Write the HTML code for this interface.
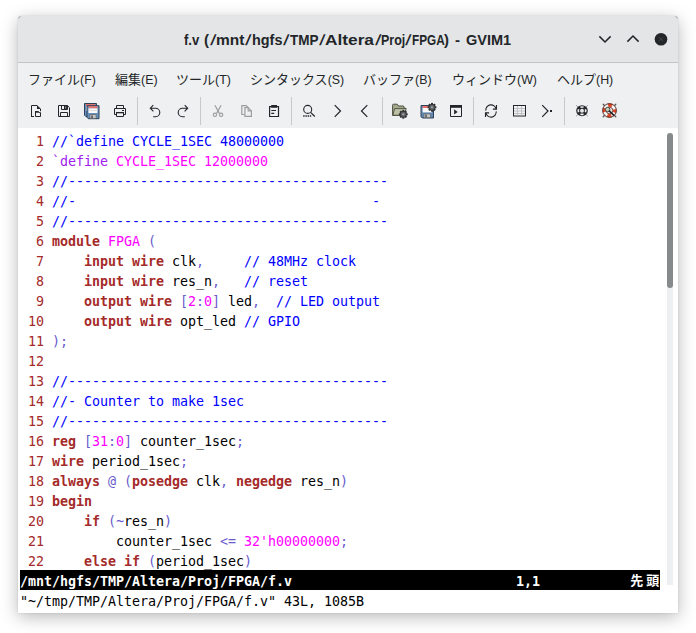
<!DOCTYPE html>
<html lang="ja">
<head>
<meta charset="utf-8">
<title>f.v (/mnt/hgfs/TMP/Altera/Proj/FPGA) - GVIM1</title>
<style>
html,body{margin:0;padding:0;}
body{width:696px;height:633px;background:#fff;overflow:hidden;position:relative;font-family:"Liberation Sans","Noto Sans CJK JP",sans-serif;}
#win{position:absolute;left:18px;top:16px;width:660px;height:597px;background:#fff;border-radius:3px 3px 0 0;
  box-shadow:0 4px 17px rgba(0,0,0,0.28),0 0 2.5px rgba(0,0,0,0.10);}
#title{position:absolute;left:0;top:0;width:660px;height:46px;background:#e3e5e7;border-radius:3px 3px 0 0;border-bottom:1px solid #c2c4c6;}
#ttext{position:absolute;left:0;top:13px;width:660px;height:22px;white-space:pre;font-weight:bold;font-size:15px;line-height:22px;color:#232629;}.ts{position:absolute;top:0;display:inline-block;transform-origin:0 50%;}
#chrome{position:absolute;left:0;top:47px;width:660px;height:65px;background:#eff0f1;}
.mi{position:absolute;top:8px;height:20px;line-height:20px;font-size:13px;color:#232629;white-space:nowrap;}
.mi span{font-size:12.4px;}
.sep{position:absolute;top:80px;width:1px;height:34px;background:#c9cbcd;}
.ic{position:absolute;top:87px;width:16px;height:16px;overflow:visible;}
#ed{position:absolute;left:2px;top:114px;width:640px;height:480px;background:#fff;font-family:"DejaVu Sans Mono","Liberation Mono",monospace;font-size:13.333px;letter-spacing:-0.0255px;color:#000;}
.l{height:20px;line-height:20px;white-space:pre;position:relative;top:2px;}
.n{color:#a52a2a;}
.c{color:#0000ff;}
.k{color:#a52a2a;font-weight:bold;}
.m{color:#ff00ff;}
.s{color:#6a5acd;}
.p{color:#a020f0;}
#st{position:absolute;left:0;top:440px;width:640px;height:20px;background:#000;color:#fff;font-weight:bold;}
#st .l{position:absolute;left:0;top:1px;}#cmd .l{position:absolute;left:0;top:2px;}
#cmd{position:absolute;left:0;top:460px;width:640px;height:20px;}
.jp{font-family:"Noto Sans CJK JP","IPAGothic",sans-serif;font-weight:bold;font-size:13px;display:inline-block;width:16px;text-align:center;position:relative;top:-1.2px;left:0.8px;}
#sbt{position:absolute;left:649px;top:117px;width:6px;height:451.6px;border-radius:3px 3px 0 0;background:#eeeff0;}
#sbh{position:absolute;left:649px;top:117px;width:6px;height:155px;border-radius:3px;background:#868a8b;}
</style>
</head>
<body>
<div id="win">
  <div id="title">
    <div id="ttext"><span class="ts" style="left:165.5px;transform:scaleX(0.873)">f.v </span><span class="ts" style="left:185.9px;transform:scaleX(1.000)">(</span><span class="ts" style="left:192.7px;transform-origin:50% 55%;transform:skewX(-13deg)">/</span><span class="ts" style="left:198.1px;transform:scaleX(1.033)">mnt</span><span class="ts" style="left:227.9px;transform-origin:50% 55%;transform:skewX(-13deg)">/</span><span class="ts" style="left:233.5px;transform:scaleX(0.960)">hgfs</span><span class="ts" style="left:265.8px;transform-origin:50% 55%;transform:skewX(-13deg)">/</span><span class="ts" style="left:271.9px;transform:scaleX(0.903)">TMP</span><span class="ts" style="left:301.7px;transform-origin:50% 55%;transform:skewX(-13deg)">/</span><span class="ts" style="left:307.3px;transform:scaleX(1.152)">Altera</span><span class="ts" style="left:357.7px;transform-origin:50% 55%;transform:skewX(-13deg)">/</span><span class="ts" style="left:363.1px;transform:scaleX(0.829)">Proj</span><span class="ts" style="left:388.4px;transform-origin:50% 55%;transform:skewX(-13deg)">/</span><span class="ts" style="left:393.8px;transform:scaleX(0.785)">FPGA</span><span class="ts" style="left:426.0px;transform:scaleX(1.000)">) </span><span class="ts" style="left:437.1px;transform:scaleX(1.000)">- </span><span class="ts" style="left:447.9px;transform:scaleX(0.968)">GVIM1</span></div>
    <svg style="position:absolute;left:576px;top:12px" width="80" height="22" viewBox="0 0 80 22">
      <path d="M5.4 8.4 L11 14 L16.6 8.4" fill="none" stroke="#232629" stroke-width="1.5"/>
      <path d="M33.4 13.6 L39 8 L44.6 13.6" fill="none" stroke="#232629" stroke-width="1.5"/>
      <circle cx="67" cy="11.3" r="6.3" fill="#232629"/>
      <path d="M65 9.3 L69 13.3 M69 9.3 L65 13.3" stroke="#46494d" stroke-width="1"/>
    </svg>
  </div>
  <svg style="position:absolute;left:0;top:0" width="660" height="6" viewBox="0 0 660 6"><path d="M.5 2.6A2.4 2.4 0 0 1 2.6 .5" fill="none" stroke="#a0a0a0" stroke-width=".9"/><path d="M657.4 .5A2.4 2.4 0 0 1 659.5 2.6" fill="none" stroke="#a0a0a0" stroke-width=".9"/></svg>
  <div id="chrome"></div>
  <div id="menu" style="position:absolute;left:0;top:46px;">
    <div class="mi" style="left:10px">ファイル<span>(F)</span></div>
    <div class="mi" style="left:97px">編集<span>(E)</span></div>
    <div class="mi" style="left:158px">ツール<span>(T)</span></div>
    <div class="mi" style="left:232px">シンタックス<span>(S)</span></div>
    <div class="mi" style="left:345px">バッファ<span>(B)</span></div>
    <div class="mi" style="left:434px">ウィンドウ<span>(W)</span></div>
    <div class="mi" style="left:539px">ヘルプ<span>(H)</span></div>
  </div>
  <svg id="tbsvg" style="position:absolute;left:0;top:80px" width="660" height="32" viewBox="18 96 660 32">
<rect x="137" y="97" width="1" height="28" fill="#c6c8ca"/>
<rect x="200" y="97" width="1" height="28" fill="#c6c8ca"/>
<rect x="291" y="97" width="1" height="28" fill="#c6c8ca"/>
<rect x="382" y="97" width="1" height="28" fill="#c6c8ca"/>
<rect x="473" y="97" width="1" height="28" fill="#c6c8ca"/>
<rect x="564" y="97" width="1" height="28" fill="#c6c8ca"/>
<g transform="translate(28,103)"><path d="M3.5 14V2.5H9M12.5 6V8.2M3.5 13.5H6" fill="none" stroke="#232629"/><path d="M9 2l4 4H9z" fill="#232629"/><path d="M7.5 13.5V8.8H10.2l.8.8H12.5v3.9z" fill="none" stroke="#232629"/><rect x="7" y="8" width="3.6" height="1.6" fill="#232629"/></g>
<g transform="translate(56,103)"><path d="M2.5 2.5H11.3L13.5 4.7V13.5H2.5z" fill="none" stroke="#232629"/><path d="M5.5 2.5V6.5H11.5V2.5" fill="none" stroke="#232629"/><rect x="8" y="2.5" width="3" height="4" fill="#232629"/><rect x="9.2" y="3.4" width="1" height="2.2" fill="#9a9c9e"/><path d="M4.5 13.5V9.5H11.5V13.5" fill="none" stroke="#232629"/></g>
<g transform="translate(84,103)"><g transform="translate(0,0)"><path d="M.5 .5H12.5V13.5H1.8L.5 12.2z" fill="#6690bd" stroke="#2e4157"/><rect x="2" y="1" width="9" height="2.2" fill="#e8736e"/><rect x="2" y="3.2" width="9" height="4.6" fill="#fafafa"/><rect x="2" y="5" width="9" height=".8" fill="#d9d9d9"/><rect x="3.5" y="9.5" width="6" height="3.6" fill="#c9c9c6" stroke="#5a5a58" stroke-width=".6"/><rect x="4.8" y="10.2" width="1.6" height="2.6" fill="#55595c"/></g><g transform="translate(2.5,2.2)"><path d="M.5 .5H12.5V13.5H1.8L.5 12.2z" fill="#6690bd" stroke="#2e4157"/><rect x="2" y="1" width="9" height="2.2" fill="#e8736e"/><rect x="2" y="3.2" width="9" height="4.6" fill="#fafafa"/><rect x="2" y="5" width="9" height=".8" fill="#d9d9d9"/><rect x="3.5" y="9.5" width="6" height="3.6" fill="#c9c9c6" stroke="#5a5a58" stroke-width=".6"/><rect x="4.8" y="10.2" width="1.6" height="2.6" fill="#55595c"/></g></g>
<g transform="translate(112,103)"><path d="M4.5 5.5V2.5H11.5V5.5" fill="none" stroke="#232629"/><path d="M4.5 11.5H2.5V5.5H13.5V11.5H11.5" fill="none" stroke="#232629"/><path d="M4.5 9.5H11.5V13.5H4.5z" fill="none" stroke="#232629"/><rect x="4" y="9" width="8" height="1.3" fill="#232629"/><rect x="10" y="7" width="2" height="1" fill="#232629"/></g>
<g transform="translate(147,103)"><path d="M6.3 2.2L3.3 5.2L6.4 8.3M3.5 5.3H8.6A4.2 4.2 0 0 1 8.6 13.7H6.2" fill="none" stroke="#232629" stroke-width="1.1"/></g>
<g transform="translate(175,103)"><path d="M9.7 2.2L12.7 5.2L9.6 8.3M12.5 5.3H7.4A4.2 4.2 0 0 0 7.4 13.7H9.8" fill="none" stroke="#232629" stroke-width="1.1"/></g>
<g transform="translate(210,103)"><path d="M4.9 2.3L9.4 10.4M11.1 2.3L6.6 10.4" fill="none" stroke="#9c9ea0" stroke-width="1.2"/><circle cx="4.9" cy="11.8" r="1.7" fill="none" stroke="#9c9ea0" stroke-width="1.1"/><circle cx="11.1" cy="11.8" r="1.7" fill="none" stroke="#9c9ea0" stroke-width="1.1"/></g>
<g transform="translate(238,103)"><path d="M6.6 11.5H3.8V2.6H8.2L10 4.4" fill="none" stroke="#9c9ea0" stroke-width="1.2"/><path d="M6.9 4.7H10.2L13.4 7.9V13.4H6.9z" fill="none" stroke="#9c9ea0" stroke-width="1.2"/><path d="M10.2 4.7V7.9H13.4" fill="none" stroke="#9c9ea0" stroke-width="1.1"/></g>
<g transform="translate(266,103)"><path d="M3.6 3.6H12.5V13.5H3.6z" fill="none" stroke="#232629" stroke-width="1.2"/><rect x="5.2" y="2" width="5.8" height="2.7" fill="#232629"/><path d="M5.3 7.5H10M5.3 10.4H8.2" stroke="#232629" stroke-width="1.1"/></g>
<g transform="translate(301,103)"><circle cx="6.7" cy="6.4" r="4" fill="none" stroke="#232629" stroke-width="1.1"/><path d="M9.6 9.3L13.8 13.5" stroke="#232629" stroke-width="1.2"/><path d="M2.2 13H10.4" stroke="#232629" stroke-width="1.4" stroke-dasharray="1.4 .8"/></g>
<g transform="translate(329,103)"><path d="M5.7 2.2L11.5 8L5.7 13.8" fill="none" stroke="#232629" stroke-width="1.2"/></g>
<g transform="translate(357,103)"><path d="M10.3 2.2L4.5 8L10.3 13.8" fill="none" stroke="#232629" stroke-width="1.2"/></g>
<g transform="translate(392,103)"><path d="M.6 12.5V2.2Q.6 1.2 1.6 1.2H5.2L6.6 3H11Q12 3 12 4V5.2H13.6L12.4 12.5z" fill="#a4a88c" stroke="#4c4f40" stroke-width="1"/><path d="M.9 12.2L2.6 5.6H14.2L12.4 12.2z" fill="#bdc1a6" stroke="#4c4f40" stroke-width=".9"/><g transform="translate(11.3,11.3)"><g fill="#2e3032"><rect x="-1" y="-4.4" width="2" height="8.8"/><rect x="-4.4" y="-1" width="8.8" height="2"/><rect x="-1" y="-4.4" width="2" height="8.8" transform="rotate(45)"/><rect x="-4.4" y="-1" width="8.8" height="2" transform="rotate(45)"/></g><circle r="3.1" fill="#5c5f61" stroke="#2e3032" stroke-width=".9"/><circle r="1.1" fill="#a4a6a8"/></g></g>
<g transform="translate(420,103)"><path d="M1 2.5H13.5V15H2.3L1 13.7z" fill="#6088b4" stroke="#2e4157"/><rect x="2.6" y="3" width="9.4" height="2" fill="#e8736e"/><rect x="2.6" y="5" width="9.4" height="4.4" fill="#fafafa"/><rect x="4" y="11" width="6.4" height="3.6" fill="#c9c9c6" stroke="#5a5a58" stroke-width=".6"/><rect x="5.2" y="11.6" width="1.6" height="2.8" fill="#55595c"/><g transform="translate(12,4.3)"><g fill="#2e3032"><rect x="-1" y="-4.4" width="2" height="8.8"/><rect x="-4.4" y="-1" width="8.8" height="2"/><rect x="-1" y="-4.4" width="2" height="8.8" transform="rotate(45)"/><rect x="-4.4" y="-1" width="8.8" height="2" transform="rotate(45)"/></g><circle r="3.1" fill="#5c5f61" stroke="#2e3032" stroke-width=".9"/><circle r="1.1" fill="#a4a6a8"/></g></g>
<g transform="translate(448,103)"><path d="M2.5 2.5H13.5V13.5H2.5z" fill="none" stroke="#232629"/><rect x="2" y="2" width="12" height="2.8" fill="#232629"/><path d="M6.1 6.3v5.2l3.6-2.6z" fill="#232629"/></g>
<g transform="translate(483,103)"><path d="M2.8 7.6A5.2 5.2 0 0 1 13.1 6.2M13.2 8.4A5.2 5.2 0 0 1 2.9 9.8" fill="none" stroke="#232629" stroke-width="1.1"/><path d="M13.5 2V6.1H9.9M2.5 14V9.9H6.1" fill="none" stroke="#232629" stroke-width="1.1"/></g>
<g transform="translate(511,103)"><rect x="2.5" y="2.5" width="12" height="10.5" fill="#f1f2f3" stroke="#232629"/><path d="M6.5 3V12.5M10.5 3V12.5M3 5.5H14M3 8H14M3 10.5H14" stroke="#bbbdbf" stroke-width=".9" fill="none"/></g>
<g transform="translate(539,103)"><path d="M3.2 2.2L9 8L3.2 13.8" fill="none" stroke="#232629" stroke-width="1.2"/><rect x="11" y="7" width="2" height="2" fill="#232629"/></g>
<g transform="translate(574,103)"><g transform="translate(8,7.7)"><path d="M-5.8-5.4L-3.6-3.4M5.8-5.4L3.6-3.4M-5.8 5.4L-3.6 3.4M5.8 5.4L3.6 3.4" stroke="#232629" stroke-width=".8" opacity=".55"/><ellipse rx="5.8" ry="5.5" fill="#232629"/><g fill="#eff0f1"><path transform="rotate(0)" d="M-1.78 -4.19A4.55 4.55 0 0 1 1.78 -4.19L1.28 -2.62A2.85 2.85 0 0 0 -1.28 -2.62z"/><path transform="rotate(90)" d="M-1.78 -4.19A4.55 4.55 0 0 1 1.78 -4.19L1.28 -2.62A2.85 2.85 0 0 0 -1.28 -2.62z"/><path transform="rotate(180)" d="M-1.78 -4.19A4.55 4.55 0 0 1 1.78 -4.19L1.28 -2.62A2.85 2.85 0 0 0 -1.28 -2.62z"/><path transform="rotate(270)" d="M-1.78 -4.19A4.55 4.55 0 0 1 1.78 -4.19L1.28 -2.62A2.85 2.85 0 0 0 -1.28 -2.62z"/></g><circle r="1.95" fill="#eff0f1"/><circle r=".6" fill="#c9cbcd"/></g></g>
<g transform="translate(602,103)"><g transform="translate(7.5,7.5)"><path d="M-6.3-6.3L6.3 6.3M6.3-6.3L-6.3 6.3" stroke="#555" stroke-width="1.3" stroke-linecap="round"/><circle r="5.1" fill="none" stroke="#f2f2f2" stroke-width="3.6"/><circle r="5.1" fill="none" stroke="#e0482a" stroke-width="3.6" stroke-dasharray="4 4" stroke-dashoffset="2"/><circle r="6.9" fill="none" stroke="#4a2018" stroke-width=".9"/><circle r="3.3" fill="#e2e2e2" stroke="#6a3226" stroke-width=".8"/><circle cx="-1.9" cy="-1" r="2.2" fill="#c9d2bb" stroke="#3c3c3c" stroke-width=".9"/><path d="M-.1 .7L4.2 4.6" stroke="#222" stroke-width="1.6" stroke-linecap="round"/></g></g>
</svg>
  <div id="ed">
<div class="l"><span class="n">  1 </span><span class="c">//`define CYCLE_1SEC 48000000</span></div>
<div class="l"><span class="n">  2 </span><span class="p">`define</span> <span class="m">CYCLE_1SEC 12000000</span></div>
<div class="l"><span class="n">  3 </span><span class="c">//----------------------------------------</span></div>
<div class="l"><span class="n">  4 </span><span class="c">//-                                     -</span></div>
<div class="l"><span class="n">  5 </span><span class="c">//----------------------------------------</span></div>
<div class="l"><span class="n">  6 </span><span class="k">module</span> <span class="m">FPGA</span> <span class="s">(</span></div>
<div class="l"><span class="n">  7 </span>    <span class="k">input</span> <span class="k">wire</span> clk<span class="s">,</span>     <span class="c">// 48MHz clock</span></div>
<div class="l"><span class="n">  8 </span>    <span class="k">input</span> <span class="k">wire</span> res_n<span class="s">,</span>   <span class="c">// reset</span></div>
<div class="l"><span class="n">  9 </span>    <span class="k">output</span> <span class="k">wire</span> <span class="s">[</span><span class="m">2</span><span class="s">:</span><span class="m">0</span><span class="s">]</span> led<span class="s">,</span>  <span class="c">// LED output</span></div>
<div class="l"><span class="n"> 10 </span>    <span class="k">output</span> <span class="k">wire</span> opt_led <span class="c">// GPIO</span></div>
<div class="l"><span class="n"> 11 </span><span class="s">);</span></div>
<div class="l"><span class="n"> 12 </span></div>
<div class="l"><span class="n"> 13 </span><span class="c">//----------------------------------------</span></div>
<div class="l"><span class="n"> 14 </span><span class="c">//- Counter to make 1sec</span></div>
<div class="l"><span class="n"> 15 </span><span class="c">//----------------------------------------</span></div>
<div class="l"><span class="n"> 16 </span><span class="k">reg</span> <span class="s">[</span><span class="m">31</span><span class="s">:</span><span class="m">0</span><span class="s">]</span> counter_1sec<span class="s">;</span></div>
<div class="l"><span class="n"> 17 </span><span class="k">wire</span> period_1sec<span class="s">;</span></div>
<div class="l"><span class="n"> 18 </span><span class="k">always</span> <span class="s">@</span> <span class="s">(</span><span class="k">posedge</span> clk<span class="s">,</span> <span class="k">negedge</span> res_n<span class="s">)</span></div>
<div class="l"><span class="n"> 19 </span><span class="k">begin</span></div>
<div class="l"><span class="n"> 20 </span>    <span class="k">if</span> <span class="s">(~</span>res_n<span class="s">)</span></div>
<div class="l"><span class="n"> 21 </span>        counter_1sec <span class="s">&lt;=</span> <span class="m">32'h00000000</span><span class="s">;</span></div>
<div class="l"><span class="n"> 22 </span>    <span class="k">else</span> <span class="k">if</span> <span class="s">(</span>period_1sec<span class="s">)</span></div>
<div id="st"><div class="l">/mnt/hgfs/TMP/Altera/Proj/FPGA/f.v                            1,1           <span class="jp">先</span><span class="jp">頭</span></div></div>
<div id="cmd"><div class="l">"~/tmp/TMP/Altera/Proj/FPGA/f.v" 43L, 1085B</div></div>
  </div>
  <div id="sbt"></div>
  <div id="sbh"></div>
</div>
</body>
</html>
